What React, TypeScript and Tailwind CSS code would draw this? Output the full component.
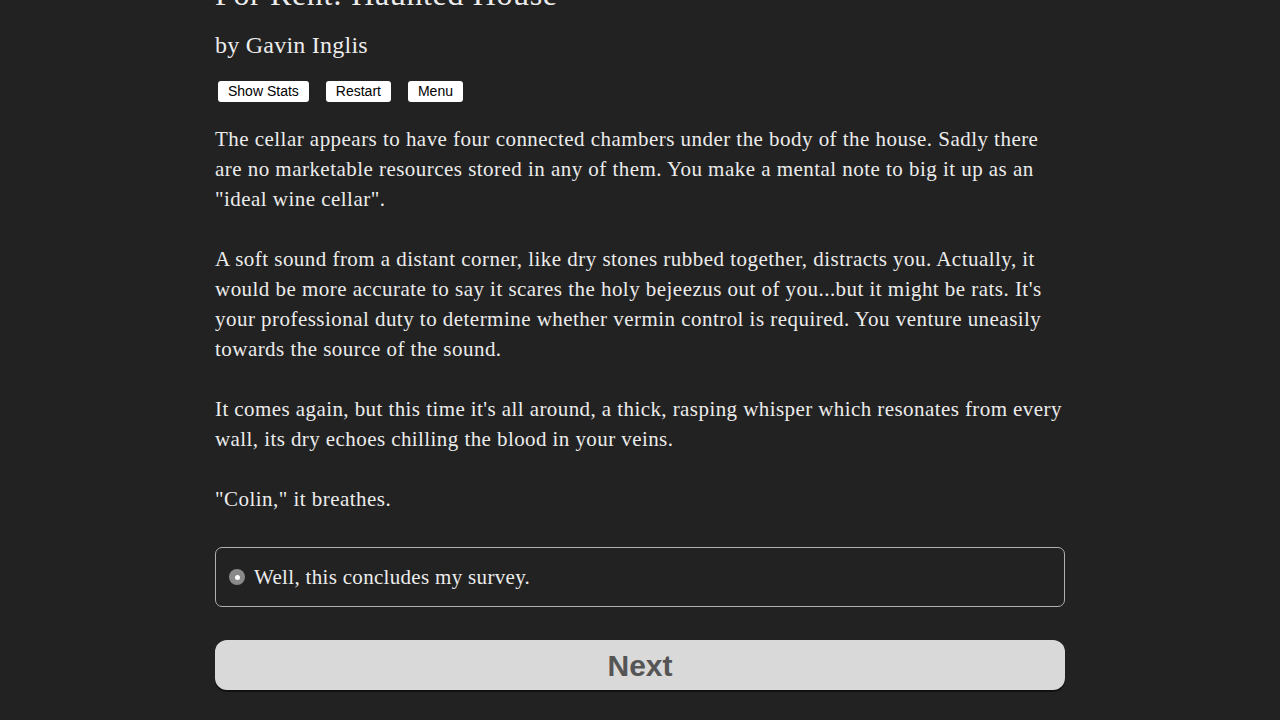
import React from "react";

const serif = { fontFamily: '"Liberation Serif", "Times New Roman", serif' };

export default function App() {
  return (
    <div className="w-full h-[720px] overflow-hidden bg-[#222222] text-[#ececec]" style={serif}>
      <div className="mx-auto w-[850px]">
        <h1 className="-mt-[26px] text-[32px] leading-[40px] font-normal tracking-[0.02em]">For Rent: Haunted House</h1>
        <div className="mt-[16px] text-[24px] leading-[30px] tracking-[0.01em]">by Gavin Inglis</div>
        <div className="mt-[21px] ml-[3px] flex gap-[17px]" style={{ fontFamily: '"Liberation Sans", Arial, sans-serif' }}>
          <button className="h-[21px] px-[10px] rounded-[3px] bg-white text-black text-[14px] leading-[21px]">Show Stats</button>
          <button className="h-[21px] px-[10px] rounded-[3px] bg-white text-black text-[14px] leading-[21px]">Restart</button>
          <button className="h-[21px] px-[10px] rounded-[3px] bg-white text-black text-[14px] leading-[21px]">Menu</button>
        </div>
        <div className="mt-[22px] text-[21px] leading-[30px] tracking-[0.022em]">
          <p>The cellar appears to have four connected chambers under the body of the house. Sadly there<br />are no marketable resources stored in any of them. You make a mental note to big it up as an<br />"ideal wine cellar".</p>
          <p className="mt-[30px]">A soft sound from a distant corner, like dry stones rubbed together, distracts you. Actually, it<br />would be more accurate to say it scares the holy bejeezus out of you...but it might be rats. It's<br />your professional duty to determine whether vermin control is required. You venture uneasily<br />towards the source of the sound.</p>
          <p className="mt-[30px] tracking-[0.02em]">It comes again, but this time it's all around, a thick, rasping whisper which resonates from every<br />wall, its dry echoes chilling the blood in your veins.</p>
          <p className="mt-[30px]">"Colin," it breathes.</p>
        </div>
        <div className="mt-[33px] h-[60px] rounded-[7px] border border-[#b0b0b0] flex items-center pl-[13px] gap-[9px]">
          <span className="w-[16px] h-[16px] rounded-full bg-[#8a8a8a] flex items-center justify-center">
            <span className="w-[5px] h-[5px] rounded-full bg-white" />
          </span>
          <span className="text-[21px] leading-[30px] tracking-[0.015em]">Well, this concludes my survey.</span>
        </div>
        <button className="mt-[33px] w-full h-[50px] rounded-[12px] bg-[#d9d9d9] text-[#555555] text-[30px] font-bold shadow-[0_2px_0_#111]" style={{ fontFamily: '"Liberation Sans", Arial, sans-serif' }}>Next</button>
      </div>
    </div>
  );
}
